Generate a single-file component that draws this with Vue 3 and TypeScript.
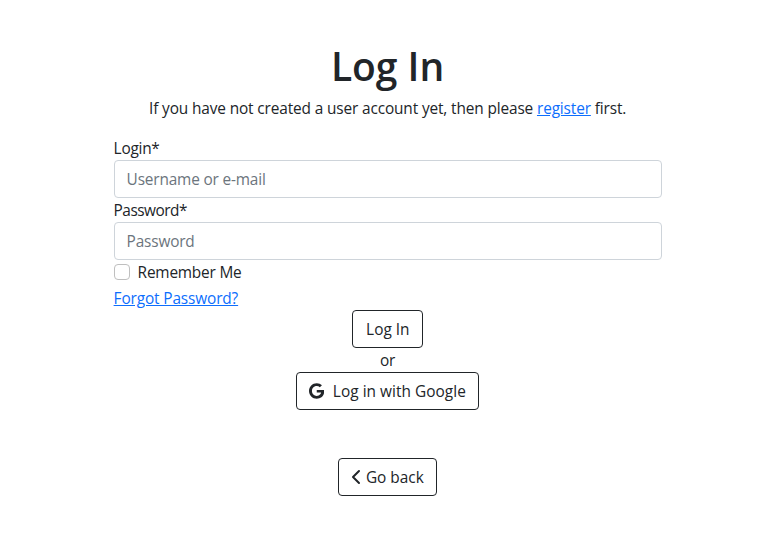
<script setup lang="ts">
import { ref } from 'vue'

const login = ref('')
const password = ref('')
const remember = ref(false)
</script>

<template>
  <main class="page">
    <h1 class="title"><span>Log In</span></h1>
    <p class="intro">If you have not created a user account yet, then please <a href="#">register</a> first.</p>
    <form class="form" @submit.prevent>
      <label class="label login-label" for="login">Login*</label>
      <input id="login" v-model="login" class="control user-control" type="text" placeholder="Username or e-mail" />
      <label class="label" for="password">Password*</label>
      <input id="password" v-model="password" class="control" type="password" placeholder="Password" />
      <div class="check">
        <input id="remember" v-model="remember" type="checkbox" />
        <label class="remember-label" for="remember">Remember Me</label>
      </div>
      <div class="forgot"><a href="#">Forgot Password?</a></div>
      <div class="actions">
        <button class="btn submit" type="submit"><span>Log In</span></button>
        <span class="or">or</span>
        <button class="btn google" type="button">
          <svg width="15.25" height="16" viewBox="0 0 488 512" fill="currentColor">
            <path d="M488 261.8C488 403.3 391.1 504 248 504 110.8 504 0 393.2 0 256S110.8 8 248 8c66.8 0 123 24.5 166.3 64.9l-67.5 64.9C258.5 52.6 94.3 116.6 94.3 256c0 86.5 69.1 156.6 153.7 156.6 98.2 0 135-70.4 140.8-106.9H248v-85.3h236.1c2.3 12.7 3.9 24.9 3.9 41.4z" />
          </svg>
          <span>Log in with Google</span>
        </button>
      </div>
    </form>
    <button class="btn back" type="button">
      <svg width="10" height="16" viewBox="0 0 10 16" fill="none" stroke="currentColor" stroke-width="2" stroke-linecap="round" stroke-linejoin="round">
        <path d="M8 2 2 8l6 6" />
      </svg>
      <span>Go back</span>
    </button>
  </main>
</template>

<style>
body {
  margin: 0;
  background: #fff;
}
</style>

<style scoped>
.page {
  box-sizing: border-box;
  width: 548px;
  margin-left: 113.6px;
  padding-top: 40px;
  display: flex;
  flex-direction: column;
  align-items: center;
  color: #212529;
  font: 400 15.4px/26px 'Open Sans', 'Noto Sans', sans-serif;
  letter-spacing: -0.13px;
}
.title {
  margin: 0 0 8px;
  padding-top: 2px;
  height: 46px;
  font: 600 39px/48px 'Open Sans', 'Noto Sans', sans-serif;
  letter-spacing: 0;
  white-space: nowrap;
}
.intro {
  height: 24px;
  margin: 0 0 16px;
  white-space: nowrap;
}
a {
  color: #0d6efd;
  text-decoration: underline;
}
.form {
  width: 100%;
}
.label {
  display: block;
  height: 24px;
  letter-spacing: -0.5px;
}
.login-label {
  letter-spacing: -0.25px;
}
.control {
  display: block;
  box-sizing: border-box;
  width: 100%;
  height: 38px;
  padding: 6px 12px;
  border: 1px solid #ced4da;
  border-radius: 4px;
  background: #fff;
  color: #212529;
  font: inherit;
  line-height: 24px;
  letter-spacing: -0.17px;
}
.control::placeholder {
  color: #6c757d;
  opacity: 1;
}
.check {
  display: flex;
  height: 26px;
  letter-spacing: -0.2px;
}
.check input {
  appearance: none;
  box-sizing: border-box;
  width: 16px;
  height: 16px;
  margin: 4px 8px 0 0;
  border: 1px solid #bfbfbf;
  border-radius: 4px;
  background: #fff;
}
.forgot {
  height: 24px;
  letter-spacing: -0.13px;
}
.actions {
  display: flex;
  flex-direction: column;
  align-items: center;
}
.or {
  height: 24px;
}
.btn {
  box-sizing: border-box;
  display: flex;
  align-items: center;
  height: 38px;
  padding: 0 0 0 12px;
  border: 1px solid #212529;
  border-radius: 4px;
  background: #fff;
  color: #212529;
  font: inherit;
  letter-spacing: 0;
  white-space: nowrap;
}
.btn span {
  padding-top: 2px;
}
.submit {
  width: 71px;
  padding-left: 13px;
}
.google {
  width: 183px;
  gap: 8.5px;
  letter-spacing: 0.04px;
}
.back {
  width: 99px;
  margin-top: 48px;
  padding-left: 11.5px;
  gap: 5.3px;
}
</style>
